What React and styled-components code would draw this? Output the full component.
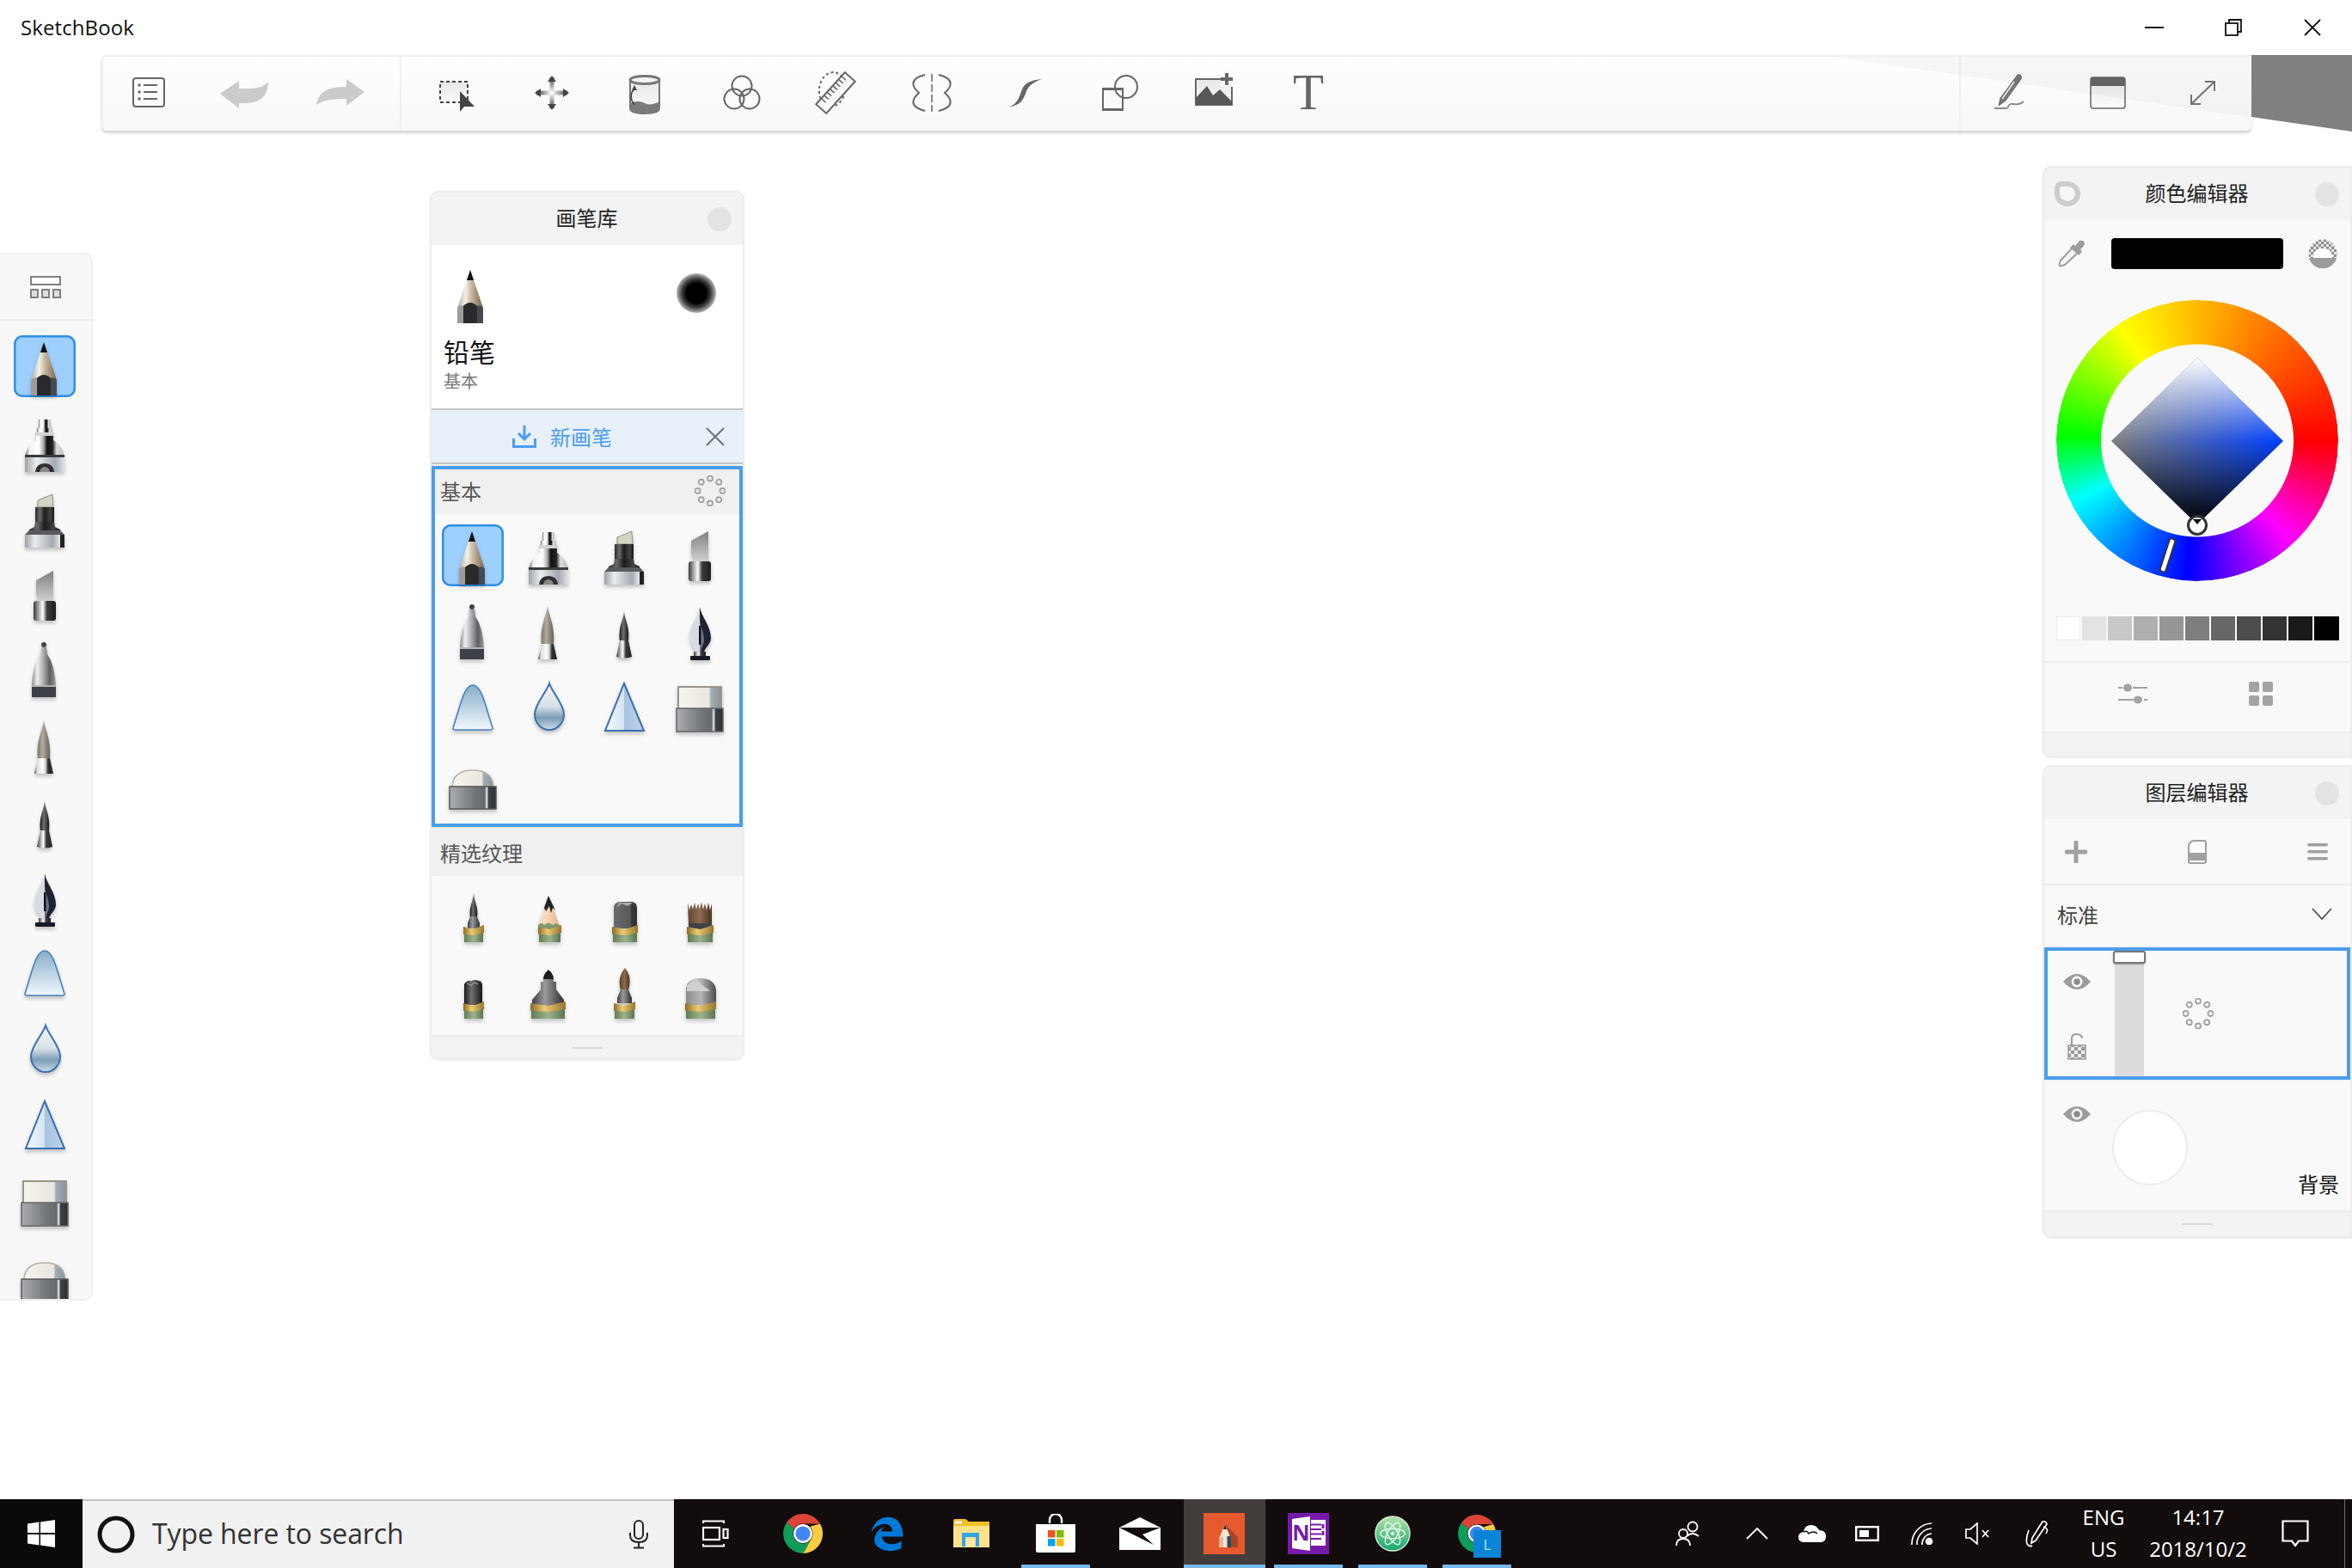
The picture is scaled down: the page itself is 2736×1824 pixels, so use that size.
import React from "react";
import styled, { createGlobalStyle } from "styled-components";

const Global = createGlobalStyle`
  html, body { margin: 0; padding: 0; background: #fff; width: 2736px; height: 1824px; overflow: hidden; }
  * { box-sizing: border-box; }
  #root { width: 2736px; height: 1824px; overflow: hidden; }
`;

const CJK = `"Noto Sans CJK SC", "Noto Sans", sans-serif`;
const LATIN = `"Open Sans", "Noto Sans", sans-serif`;

const Page = styled.div`
  width: 2736px; height: 1824px; display: flex; flex-direction: column; overflow: hidden;
  background: #fff; font-family: ${CJK}; color: #222;
`;
const Hidden = styled.svg` display: block; width: 0; height: 0; `;

/* ---------- Title bar ---------- */
const TitleBar = styled.header` height: 64px; flex: none; display: flex; align-items: center; padding-left: 24px; `;
const AppName = styled.div` font: 400 24px ${LATIN}; color: #111; letter-spacing: 0.1px; flex: 1; padding-bottom: 1px; `;
const WinControls = styled.div` display: flex; `;
const WinButton = styled.div` width: 92px; height: 44px; display: grid; place-items: center; `;

/* ---------- Tool bar ---------- */
const ToolRow = styled.div` height: 89px; flex: none; display: flex; padding-left: 118px; `;
const Toolbar = styled.div`
  position: relative; width: 2501px; height: 88px; display: flex;
  background: linear-gradient(#fefefe, #f8f8f8);
  border-top: 2px solid #f0f0f0; border-left: 2px solid #f0f0f0; border-radius: 6px 0 6px 6px;
  box-shadow: 0 3px 3px rgba(0,0,0,.17);
  &::after {
    content: ""; position: absolute; inset: 0; pointer-events: none; background: rgba(0,0,0,.028);
    clip-path: polygon(80.5% 0, 100% 0, 100% 82%);
  }
`;
const ToolGroup = styled.div`
  display: flex; align-items: center; height: 100%; flex: ${p => p.$grow ? 1 : "none"};
  width: ${p => p.$w ? p.$w + "px" : "auto"}; padding-left: ${p => p.$pad || 0}px;
  margin-left: ${p => p.$shift || 0}px;
  border-left: ${p => p.$line ? "2px solid #f0f0f0" : "none"};
`;
const ToolButton = styled.div`
  flex: none; width: ${p => p.$w || 110}px; height: 56px; display: grid; place-items: center; margin-bottom: 2px; padding-right: 2px;
  svg { overflow: visible; }
`;
const CornerWedge = styled.div`
  flex: 1; height: 89px; background: #808080; clip-path: polygon(0 0, 100% 0, 100% 100%, 0 81%);
`;

/* ---------- Workspace ---------- */
const Workspace = styled.main` flex: 1; display: flex; align-items: flex-start; min-height: 0; `;

const Rail = styled.aside`
  width: 108px; height: 1219px; margin-top: 141px; overflow: hidden; display: flex; flex-direction: column;
  background: #f8f8f8; border: 2px solid #efefef; border-left: none; border-radius: 0 10px 10px 0;
`;
const RailHead = styled.div` height: 77px; flex: none; display: grid; place-items: center; border-bottom: 2px solid #ececec; `;
const RailList = styled.div` display: flex; flex-direction: column; align-items: center; gap: 16.5px; padding: 17px 2px 0 0; `;

const BrushCell = styled.div`
  width: 72px; height: 72px; flex: none; border-radius: 10px;
  background: ${p => p.$on ? "#9dcfff" : "transparent"};
  box-shadow: ${p => p.$on ? "inset 0 0 0 2.5px #2f8fe8" : "none"};
  svg { display: block; filter: drop-shadow(0 3px 2px rgba(0,0,0,.22)); }
`;

const Panel = styled.section`
  flex: none; display: flex; flex-direction: column; overflow: hidden;
  width: ${p => p.$w}px; height: ${p => p.$h}px;
  margin: ${p => p.$m || "0"};
  background: #f3f3f3; border: 2px solid #ececec; border-radius: 10px;
  ${p => p.$edge ? "border-radius:10px 0 0 10px;" : ""}
  box-shadow: 0 1px 2px rgba(0,0,0,.07);
`;
const PanelHead = styled.div`
  height: 61px; flex: none; display: grid; grid-template-columns: 1fr auto 1fr; align-items: center;
  background: #f3f3f3; padding: 0 13px 0 12px;
`;
const PanelTitle = styled.div` font-size: 24px; line-height: 32px; color: #222; padding-bottom: 3px; `;
const CloseDot = styled.div` justify-self: end; width: 28px; height: 28px; border-radius: 50%; background: #e3e3e3; `;
const RingDot = styled.div`
  width: 30px; height: 29px; border-radius: 8px 50% 50% 50%; border: 6px solid #cdcdcd; background: #f7f7f7;
`;
const GripFoot = styled.div` flex: 1; display: grid; place-items: center; background: #f3f3f3; `;
const Grip = styled.div` width: 36px; height: 2px; background: #d9d9d9; `;

/* brush panel */
const BrushInfo = styled.div` height: 190px; flex: none; background: #fff; padding: 21px 0 0 10px; display: flex; flex-direction: column; `;
const InfoTop = styled.div` display: flex; justify-content: space-between; align-items: flex-start; height: 72px; padding-right: 31px; `;
const TipDot = styled.div`
  width: 46px; height: 46px; margin-top: 12px; border-radius: 50%;
  background: radial-gradient(circle, #000 0, #000 36%, rgba(0,0,0,.75) 52%, rgba(0,0,0,.25) 72%, rgba(0,0,0,0) 100%);
`;
const BrushName = styled.div` margin: 12px 0 0 4px; font-size: 30px; line-height: 36px; color: #111; `;
const BrushSet = styled.div` margin: 5px 0 0 4px; font-size: 20px; line-height: 24px; color: #777; `;
const NewRow = styled.div`
  height: 65px; flex: none; display: flex; align-items: center; padding: 0 21px 0 94px; gap: 16px;
  background: #e8f0fa; border-top: 2px solid #c4c4c4; border-bottom: 2px solid #c4c4c4;
  font-size: 24px; color: #4a9df0;
`;
const NewClose = styled.div` margin-left: auto; height: 22px; display: flex; `;
const ActiveSet = styled.div`
  flex: none; height: 420px; margin-top: 2px; border: 4px solid #4a9ded; background: #f9f9f9;
`;
const SetHead = styled.div`
  flex: none; display: flex; align-items: center; justify-content: space-between; height: ${p => p.$h}px;
  padding: 0 ${p => p.$r || 0}px ${p => p.$b || 0}px ${p => p.$l || 6}px;
  font-size: 24px; color: #555; background: #f0f0f0;
`;
const BrushGrid = styled.div`
  flex: none; display: grid; grid-template-columns: repeat(4, 72px); column-gap: 16px; row-gap: ${p => p.$gap}px;
  align-content: start;
  padding: ${p => p.$top}px 0 0 ${p => p.$left}px; background: #f9f9f9;
  height: ${p => p.$h}px;
`;
const FootLine = styled.div` height: 2px; flex: none; background: #ececec; `;

/* right side */
const RightColumn = styled.div` margin-left: auto; width: 360px; margin-top: 40px; display: flex; flex-direction: column; `;
const ColorBody = styled.div` height: 513px; flex: none; background: #f9f9f9; display: flex; flex-direction: column; align-items: center; padding-top: 21px; `;
const ColorTop = styled.div` width: 100%; display: grid; grid-template-columns: 78px 200px 1fr; align-items: center; height: 36px; `;
const Dropper = styled.div` margin-left: 16px; height: 32px; `;
const ColorBar = styled.div` height: 36px; background: #000; border-radius: 4px; `;
const AlphaBall = styled.div` margin-left: 29px; height: 34px; `;
const Wheel = styled.div`
  position: relative; width: 328px; height: 327px; margin-top: 36px; display: grid; place-items: center;
  &::before {
    content: ""; position: absolute; inset: 0; border-radius: 50%;
    background: conic-gradient(from 90deg, #f00 0deg, #f0f 47deg, #00f 94deg, #0ff 154deg, #0f0 182deg, #ff0 236deg, #f00 360deg);
    -webkit-mask: radial-gradient(circle, transparent 111.5px, #000 112.5px);
    mask: radial-gradient(circle, transparent 111.5px, #000 112.5px);
  }
`;
const Diamond = styled.div`
  width: 200px; height: 194px; margin-top: 1px; clip-path: polygon(50% 0, 100% 50%, 50% 100%, 0 50%);
  background:
    linear-gradient(to bottom, #fff 0, rgba(255,255,255,0) 50%, rgba(0,0,0,0) 50%, #000 100%),
    linear-gradient(to right, #808080, #0040ff);
`;
const SatMark = styled.div`
  position: absolute; left: 152px; top: 250px; width: 24px; height: 24px; border-radius: 50%;
  border: 3px solid #333; background: #fff;
  &::after { content: ""; position: absolute; left: 4px; top: 2px; border: 5px solid transparent; border-top: 6px solid #000; }
`;
const HueMark = styled.div`
  position: absolute; left: 125px; top: 276px; width: 9px; height: 42px; border-radius: 4px;
  background: #fff; border: 2px solid #333; transform: rotate(18deg);
`;
const Swatches = styled.div` margin-top: 41px; width: 329px; display: flex; gap: 2px; height: 28px; `;
const Swatch = styled.div` flex: 1; background: ${p => p.$c}; box-shadow: ${p => p.$line ? "inset 0 0 0 1px #ececec" : "none"}; `;
const ColorTools = styled.div`
  height: 84px; flex: none; background: #f9f9f9; display: grid; grid-template-columns: 206px 92px; justify-items: center; align-items: center;
  padding-bottom: 8px; border-top: 2px solid #ececec; border-bottom: 2px solid #ececec;
`;

const LayerTools = styled.div`
  height: 77px; flex: none; background: #f9f9f9; border-bottom: 2px solid #ececec;
  display: flex; align-items: center; justify-content: space-between; padding: 0 26px 0 24px;
`;
const BlendRow = styled.div`
  height: 70px; flex: none; background: #f9f9f9; display: flex; align-items: center; justify-content: space-between;
  padding: 0 21px 4px 15px; font-size: 24px; color: #444;
`;
const ActiveLayer = styled.div`
  height: 154px; flex: none; margin-top: 2px; display: grid; grid-template-columns: 78px 34px 1fr;
  border: 4px solid #4a9ded; background: #f9f9f9;
`;
const LayerSide = styled.div`
  display: flex; flex-direction: column; align-items: center; padding: 26px 10px 0 0; gap: 50px;
`;
const OpacityBar = styled.div` position: relative; background: #dcdcdc; `;
const OpacityKnob = styled.div`
  position: absolute; left: -2px; top: 0; width: 38px; height: 15px; border-radius: 3px; background: #fff;
  border: 2px solid #777; box-shadow: 0 1px 2px rgba(0,0,0,.3);
`;
const LayerThumb = styled.div` padding: 55px 0 0 45px; `;
const BackLayer = styled.div`
  height: 152px; flex: none; margin-top: 2px; background: #f9f9f9; border-bottom: 2px solid #ececec;
  display: grid; grid-template-columns: 79px 88px 1fr;
`;
const BackSide = styled.div` display: flex; justify-content: center; padding: 28px 3px 0 0; `;
const PaperDot = styled.div` width: 88px; height: 88px; margin-top: 33px; border-radius: 50%; background: #fff; border: 2px solid #ececec; `;
const LayerLabel = styled.div` align-self: end; justify-self: end; margin: 0 13px 15px 0; font-size: 24px; line-height: 32px; color: #111; `;

/* ---------- Task bar ---------- */
const TaskBar = styled.footer` flex: none; height: 80px; display: flex; background: #130c0c; `;
const StartBtn = styled.div` width: 96px; display: grid; place-items: center; background: #0a0a0a; `;
const SearchBox = styled.div`
  width: 688px; display: flex; align-items: center; background: #f1f1f1; border-top: 2px solid #c2c2c2;
  padding: 0 29px 0 17px; gap: 20px; font: 400 32px ${LATIN}; color: #333;
`;
const SearchText = styled.div` flex: 1; letter-spacing: -0.1px; padding-bottom: 4px; `;
const TaskList = styled.div` display: flex; padding-left: 3px; `;
const TaskItem = styled.div`
  position: relative; width: 98px; height: 80px; display: grid; place-items: center;
  background: ${p => p.$active ? "#433e3c" : "transparent"};
  ${p => p.$active ? "width: 95px; margin: 0 1.5px;" : ""}
  &::after {
    content: ""; position: absolute; bottom: 0; height: 4px; background: #76b9ed;
    left: ${p => p.$active ? 0 : "9px"}; right: ${p => p.$active ? 0 : "9px"};
    display: ${p => p.$run ? "block" : "none"};
  }
`;
const Tray = styled.div` margin-left: auto; display: flex; align-items: center; color: #fff; font: 400 24px ${LATIN}; `;
const TrayIcon = styled.div` width: ${p => p.$w || 64}px; margin-right: ${p => p.$mr || 0}px; display: grid; place-items: center; `;
const TrayText = styled.div`
  width: ${p => p.$w}px; text-align: center; line-height: 37px; white-space: nowrap; padding-bottom: 2px;
`;
const ShowDesktop = styled.div` width: 24px; height: 80px; position: relative; &::after { content:""; position:absolute; left: 15px; top:0; bottom:0; width:1px; background:#6a6a6a; } `;
const SmallLetter = styled.text` font-family: ${LATIN}; font-weight: 700; `;
const SerifLetter = styled.text` font-family: "Liberation Serif", serif; `;

/* ---------- gradients ---------- */
const stops = (id, list, v) => (
  <linearGradient id={id} x1="0" y1="0" x2={v ? 0 : 1} y2={v ? 1 : 0} key={id}>
    {list.map(([o, c], i) => <stop key={i} offset={o} stopColor={c} />)}
  </linearGradient>
);
const Defs = () => (
  <Hidden aria-hidden="true">
    <defs>
      {stops("wood", [[0, "#b2aea4"], [.32, "#f4f0e6"], [.52, "#cdbca6"], [1, "#7a624a"]])}
      {stops("chrome", [[0, "#6a6c70"], [.12, "#f0f2f4"], [.35, "#fff"], [.47, "#aaa"], [.56, "#111"], [.7, "#222"], [.8, "#ddd"], [1, "#bbb"]])}
      {stops("silver", [[0, "#9ba0a6"], [.25, "#e8ecef"], [.5, "#c2c6cc"], [.7, "#a5a9b2"], [.88, "#e3e5e8"], [.9, "#222"], [1, "#222"]])}
      {stops("silver2", [[0, "#a0a4aa"], [.3, "#eceff2"], [.55, "#c2c6cc"], [.75, "#a5a9b2"], [1, "#dfe2e5"]])}
      {stops("dark", [[0, "#2b2b2d"], [.25, "#6a6a6e"], [.5, "#1b1b1d"], [.8, "#444"], [1, "#151517"]])}
      {stops("fer", [[0, "#3a3a3a"], [.25, "#b4b4b4"], [.42, "#fff"], [.6, "#3d3d3d"], [1, "#1e1e1e"]])}
      {stops("fer2", [[0, "#444"], [.14, "#ddd"], [.45, "#fff"], [.6, "#ccc"], [.72, "#333"], [1, "#222"]])}
      {stops("ball", [[0, "#888"], [.22, "#f0f0f0"], [.45, "#b2b5b8"], [.75, "#5a5e63"], [1, "#999da1"]])}
      {stops("chisel", [[0, "#7f7f7f"], [1, "#d2d2ce"]], true)}
      {stops("hair", [[0, "#7c766c"], [.4, "#b3ab9e"], [.7, "#8c8478"], [1, "#6b655c"]])}
      {stops("ink", [[0, "#1a1a1a"], [.4, "#707070"], [1, "#151515"]])}
      {stops("air", [[0, "#86aec8"], [.5, "#bbd3e3"], [1, "#f2f8fc"]], true)}
      {stops("drop", [[0, "#f6f7f9"], [.5, "#d6dfe7"], [.74, "#7b9cb5"], [1, "#cfdde8"]], true)}
      {stops("tri", [[0, "#f4f8fd"], [.5, "#d4e3f2"], [.5, "#a8c3e1"], [1, "#bdd2e9"]])}
      {stops("cream", [[0, "#f6f4ee"], [.72, "#e9e6df"], [.76, "#a4adb2"], [1, "#87929a"]])}
      {stops("steel", [[0, "#aaadb1"], [.55, "#70757a"], [.76, "#666a70"], [.8, "#eef1f2"], [.84, "#3c4246"], [1, "#2c3134"]])}
      {stops("green", [[0, "#5f7d55"], [.5, "#9db38a"], [1, "#587653"]])}
      {stops("gold", [[0, "#8a6b28"], [.4, "#eccb73"], [1, "#96762c"]])}
      {stops("ferr", [[0, "#3e3e40"], [.4, "#9a9a9c"], [1, "#2f2f31"]])}
      {stops("peach", [[0, "#f6e3cf"], [.5, "#f6d3b4"], [1, "#dcae86"]])}
      {stops("block", [[0, "#6c6c6c"], [.72, "#585858"], [.74, "#3a3a3a"], [1, "#2f2f2f"]])}
      {stops("bristle", [[0, "#5d4330"], [.5, "#8f6b4e"], [1, "#4a3322"]])}
      {stops("roundg", [[0, "#8c8c8c"], [.5, "#b4b4b4"], [1, "#4d4d4d"]])}
      {stops("toolfill", [[0, "#e6e8e8"], [1, "#fafafa"]], true)}
      {stops("moveH", [[0, "#444"], [.5, "#fff"], [1, "#444"]])}
      {stops("moveV", [[0, "#444"], [.5, "#fff"], [1, "#444"]], true)}
      {stops("winfill", [[0, "#e8eaeb"], [1, "#fafafa"]], true)}
      {stops("atom", [[0, "#b6e3a6"], [1, "#0fa86f"]], true)}
    </defs>
  </Hidden>
);

/* ---------- brush glyphs ---------- */
const TexBase = ({ a, b }) => (
  <g>
    <rect x={a + 1} y="58" width={b - a - 2} height="12" fill="url(#green)" />
    <path d={`M${a} 52 L${(a + b) / 2} 55 L${b} 50 V56 L${(a + b) / 2} 61 L${a} 59Z`} fill="url(#gold)" />
    <path d={`M${a} 56 L${(a + b) / 2} 58 L${b} 54 V59 L${(a + b) / 2} 62 L${a} 60.5Z`} fill="url(#gold)" />
  </g>
);
const glyphs = {
  pencil: <>
    <path d="M35 8 L50 52 V70 H20 V52 Z" fill="url(#wood)" />
    <path d="M35 8 L39 20 H31 Z" fill="#111" />
    <path d="M20 70 V52 q4-4 8-2 V70Z" fill="#9c9c9c" />
    <path d="M27 70 V50 q8-8 16 0 V70Z" fill="#2a2a2d" />
    <path d="M43 70 V50 q4-2 7 2 V70Z" fill="#454a50" />
  </>,
  tech: <>
    <rect x="29" y="9" width="14" height="10" fill="url(#chrome)" />
    <rect x="27" y="19" width="18" height="5" fill="url(#chrome)" />
    <rect x="25" y="24" width="22" height="4" fill="#d3d3d6" />
    <path d="M26 28 H46 V33 Q56 39 59 51 H13 Q16 39 26 33 Z" fill="url(#chrome)" />
    <rect x="13" y="50" width="46" height="3" fill="#3c3c3e" />
    <rect x="13" y="53" width="46" height="17" fill="url(#silver2)" />
    <path d="M25 70 Q26 60 36 60 Q46 60 47 70Z" fill="#2f2f31" />
    <path d="M30 70 Q31 64 36 64 Q41 64 42 70Z" fill="#888" />
  </>,
  marker: <>
    <path d="M28 15 L45 8 L46 23 H28 Z" fill="#d5d5c2" stroke="#555" strokeWidth=".6" />
    <rect x="25" y="23" width="22" height="17" fill="url(#dark)" />
    <path d="M25 40 H47 L48 46 L54 49 V56 H18 V49 L24 46Z" fill="url(#dark)" />
    <rect x="13" y="55" width="46" height="15" fill="url(#silver)" />
    <path d="M13 55 L18 50 H54 L59 55Z" fill="#585a5e" />
  </>,
  chisel: <>
    <path d="M26 19 L46 8 V44 H29 L26 35Z" fill="url(#chisel)" />
    <rect x="23" y="43" width="26" height="23" rx="3" fill="url(#fer)" />
  </>,
  ball: <>
    <circle cx="35" cy="6" r="3" fill="#444" />
    <path d="M32 9 H38 L39 17 Q48 30 49 54 H21 Q22 30 31 17Z" fill="url(#ball)" />
    <rect x="21" y="53" width="28" height="2" fill="#b3b3b3" />
    <rect x="21" y="55" width="28" height="12" fill="#3d4147" />
  </>,
  hair: <>
    <path d="M35 5 C37 18 44 28 42 50 H28 C26 28 33 18 35 5Z" fill="url(#hair)" />
    <path d="M28 49 H42 L46 67 H24Z" fill="url(#fer2)" />
  </>,
  inkb: <>
    <path d="M36 11 C37 22 43 28 41 46 H31 C29 28 35 22 36 11Z" fill="url(#ink)" />
    <path d="M31 45 H41 L45 64 Q36 67 27 64Z" fill="url(#fer)" />
  </>,
  nib: <>
    <path d="M36 6 C38 18 49 28 49 42 C49 49 44 51 41 58 H36 V6Z" fill="#1d2333" />
    <path d="M36 6 C34 18 24 28 24 42 C24 49 29 51 31 58 H36 Z" fill="#d8dbe0" />
    <path d="M36 16 C36 30 41 34 41 44 C41 50 38 52 37.5 58 H36Z" fill="#6b7286" />
    <rect x="35" y="28" width="2.4" height="22" fill="#0f1118" />
    <rect x="29" y="58" width="14" height="5" fill="url(#fer)" />
    <rect x="25" y="63" width="23" height="5" rx="1" fill="#161a26" />
  </>,
  air: <path d="M36 8 C46 8 50 30 59 58 Q59 60 56 60 H16 Q13 60 13 58 C22 30 26 8 36 8Z" fill="url(#air)" stroke="#4a80c0" strokeWidth="1.6" />,
  drop: <path d="M37 6 C40 16 54 30 54 42 A17 18 0 0 1 20 42 C20 30 34 16 37 6Z" fill="url(#drop)" stroke="#3a70b0" strokeWidth="2" />,
  tri: <path d="M36 6 L59 61 H14Z" fill="url(#tri)" stroke="#3a70b0" strokeWidth="2" />,
  eraser: <>
    <rect x="11" y="10" width="50" height="28" fill="url(#cream)" stroke="#9a9488" strokeWidth="2" />
    <rect x="9" y="35" width="54" height="27" fill="url(#steel)" stroke="#666" strokeWidth="1.5" />
  </>,
  round: <>
    <path d="M12 38 C12 22 22 17 36 17 C50 17 60 22 60 38Z" fill="url(#cream)" stroke="#b8b2a6" strokeWidth="1.5" />
    <rect x="9" y="36" width="54" height="26" fill="url(#steel)" stroke="#555" strokeWidth="1.5" />
  </>,
  t1: <>
    <path d="M37 13 C38 24 43 30 41 41 H33 C31 30 36 24 37 13Z" fill="url(#ink)" />
    <path d="M33 40 H41 L44 48 V54 H30 V48Z" fill="url(#ferr)" />
    <TexBase a={25} b={49} />
  </>,
  t2: <>
    <path d="M36 16 L50 54 H23Z" fill="url(#peach)" />
    <path d="M36 16 L44 33 L41 30 L39 36 L37 28 L33 34 L31 30Z" fill="#222" />
    <path d="M24 50 q4-4 7 0 q5-5 10 0 q4-4 9 1 V56 H24Z" fill="#7f9b72" />
    <TexBase a={24} b={51} />
  </>,
  t3: <>
    <path d="M24 28 Q26 23 32 23 H45 Q51 24 51 30 V54 H24Z" fill="url(#block)" />
    <path d="M28 30 L33 25 L40 28 L45 25 L50 27 L44 24 H30Z" fill="#a8a8a8" />
    <TexBase a={22} b={52} />
  </>,
  t4: <>
    <path d="M22 24 L24 33 L26 26 L28 32 L30 24 L32 32 L34 25 L36 32 L38 23 L40 32 L42 25 L44 33 L46 24 L48 33 L50 25 V50 H23Z" fill="url(#bristle)" />
    <path d="M23 48 H50 V55 H23Z" fill="#3f4247" />
    <TexBase a={21} b={52} />
  </>,
  t5: <>
    <path d="M26 30 q3-5 8-4 q5-2 9 0 q3 0 4 4 V54 H26Z" fill="url(#ink)" />
    <path d="M29 29 L34 31 L38 28 L42 30" stroke="#999" strokeWidth="1.3" fill="none" />
    <TexBase a={25} b={49} />
  </>,
  t6: <>
    <path d="M36 13 Q42 18 42 24 H30 Q30 18 36 13Z" fill="#1d1d1d" />
    <path d="M30 24 H42 V27 H45 V36 L54 48 V56 H17 V48 L27 36 V27 H30Z" fill="url(#ferr)" />
    <TexBase a={15} b={56} />
  </>,
  t7: <>
    <path d="M37 11 C43 18 44 26 41 37 H32 C29 26 31 18 37 11Z" fill="url(#bristle)" />
    <path d="M32 36 H41 L45 46 V52 H28 V46Z" fill="url(#ferr)" />
    <TexBase a={24} b={49} />
  </>,
  t8: <>
    <path d="M20 36 C20 27 27 23 37 23 C47 23 55 28 55 38 V54 H20Z" fill="url(#roundg)" />
    <path d="M21 32 Q26 24 33 24 L38 30 L48 38 H21Z" fill="#cfcfcf" />
    <TexBase a={19} b={55} />
  </>,
};
const Glyph = ({ name }) => <svg width="72" height="72" viewBox="0 0 72 72">{glyphs[name]}</svg>;

const Spinner = ({ c = "#a3a3a3" }) => (
  <svg width="36" height="36" viewBox="0 0 36 36" style={{ display: "block" }}>
    {[...Array(8)].map((_, i) => {
      const a = i * Math.PI / 4;
      return <circle key={i} cx={18 + 14.5 * Math.cos(a)} cy={18 + 14.5 * Math.sin(a)} r="3" fill="none" stroke={c} strokeWidth="1.9" />;
    })}
  </svg>
);

/* ---------- toolbar icons (56 box) ---------- */
const G = "#666";
const TI = ({ children }) => <svg width="56" height="56" viewBox="0 0 56 56">{children}</svg>;
const ToolIcons = {
  list: <TI><rect x="11" y="11" width="36" height="33" rx="3" fill="none" stroke={G} strokeWidth="2" />
    {[19, 27, 35].map(y => <g key={y}><circle cx="18" cy={y} r="1.7" fill={G} /><rect x="23" y={y - 1} width="16" height="2" fill={G} /></g>)}</TI>,
  undo: <TI><path d="M0 29 L22 14 V23 C34 23 50 24 56 15 C56 32 46 40 30 40 H22 V46 Z" fill="#cbcbcb" /></TI>,
  redo: <TI><path d="M56 27 L35 12 V21 C15 21 3 25 0 42 C8 36 20 35 35 35 V43 Z" fill="#cbcbcb" /></TI>,
  select: <TI><g transform="translate(-2 0)"><rect x="10" y="15" width="32" height="24" fill="url(#toolfill)" stroke="#444" strokeWidth="2" strokeDasharray="4 3" />
    <path d="M33 26 L50 44 L38 44 L33 50Z" fill="#444" /></g></TI>,
  move: <TI><rect x="10" y="25.5" width="36" height="5" fill="url(#moveH)" /><rect x="25.5" y="10" width="5" height="36" fill="url(#moveV)" />
    <path d="M28 8 L33 15 H23Z M28 48 L33 41 H23Z M8 28 L15 23 V33Z M48 28 L41 23 V33Z" fill="#444" /></TI>,
  fill: <TI><g transform="translate(-5 0)"><path d="M14 14 V46 Q14 52 31 52 Q48 52 48 46 V14Z" fill="url(#toolfill)" stroke="#777" strokeWidth="2" />
    <path d="M14 40 Q24 36 31 40 T48 38 V46 Q48 52 31 52 Q14 52 14 46Z" fill="#7a7a7a" />
    <ellipse cx="31" cy="13" rx="17" ry="4.5" fill="#f4f4f4" stroke="#777" strokeWidth="3" />
    <path d="M19 42 Q11 32 19 23" fill="none" stroke="#444" strokeWidth="1.5" /><path d="M19 19 L22 25 L16 25Z" fill="#444" /></g></TI>,
  circles: <TI><g fill="none" stroke={G} strokeWidth="2"><circle cx="29" cy="20" r="11.5" /><circle cx="20" cy="35" r="11.5" /><circle cx="38" cy="35" r="11.5" /></g></TI>,
  ruler: <TI><ellipse cx="24" cy="24" rx="15" ry="20" transform="rotate(8 24 24)" fill="none" stroke={G} strokeWidth="2" strokeDasharray="3 3" />
    <g transform="rotate(42 28 28)"><rect x="20" y="3" width="16" height="50" fill="#f8f8f8" stroke={G} strokeWidth="2" />
    {[9, 14, 19, 24, 29, 34, 39, 44].map(y => <line key={y} x1="20" x2="27" y1={y} y2={y} stroke={G} strokeWidth="1.5" />)}</g></TI>,
  sym: <TI><line x1="30" x2="30" y1="6" y2="50" stroke="#666" strokeWidth="1.5" strokeDasharray="9 3" />
    <g fill="none" stroke="#666" strokeWidth="2"><path d="M22 7 C2 12 8 22 15 28 C8 34 2 44 22 49" /><path d="M38 7 C58 12 52 22 45 28 C52 34 58 44 38 49" /></g></TI>,
  curve: <TI><path d="M8 44 C20 43 22 31 25 24 C28 16 36 13 48 12 C39 15 33 19 30 26 C27 36 22 44 8 44Z" fill="#666" /></TI>,
  shapes: <TI><circle cx="36" cy="21" r="13" fill="none" stroke={G} strokeWidth="2" /><rect x="9" y="23" width="23" height="25" fill="none" stroke={G} strokeWidth="2" /><rect x="8" y="22" width="25" height="3" fill={G} /><rect x="8" y="46" width="25" height="3" fill={G} /></TI>,
  image: <TI><rect x="7" y="12" width="42" height="30" fill="url(#toolfill)" stroke={G} strokeWidth="2" />
    <path d="M7 42 V34 L20 20 L27 31 L35 24 L49 38 V42Z" fill="#585858" /><rect x="36" y="3" width="14" height="18" fill="#fafafa" />
    <path d="M41 5 H45 V10 H50 V14 H45 V19 H41 V14 H36 V10 H41Z" fill={G} /></TI>,
  text: <TI><SerifLetter x="28" y="47" textAnchor="middle" fontSize="59" fill="#666">T</SerifLetter></TI>,
  pen: <TI><g transform="translate(-3 0)"><path d="M39 7 C43 6 44 9 43 12 L25 37 L17 43 L19 34Z" fill="#777" stroke="#666" /><path d="M35 15 L21 35" stroke="#eee" strokeWidth="1.5" />
    <path d="M12 46 H26 C30 46 26 40 34 41 C40 42 44 40 46 38" fill="none" stroke="#888" strokeWidth="1.8" /></g></TI>,
  win: <TI><rect x="9" y="10" width="40" height="36" rx="3" fill="url(#winfill)" stroke={G} strokeWidth="1.5" /><path d="M9 13 Q9 10 12 10 H46 Q49 10 49 13 V20 H9Z" fill="#666" /></TI>,
  expand: <TI><g transform="translate(-3 0)" fill="none" stroke="#777" strokeWidth="2"><path d="M17 41 L44 15" /><path d="M17 30 V41 H28" /><path d="M33 15 H44 V26" /></g></TI>,
};

/* ---------- task icons ---------- */
const ChromeMark = () => (
  <g>
    <path d="M3.9 9.6 A22 22 0 0 0 22.5 44 L31.5 27.5 A11 11 0 0 1 12.4 16.5Z" fill="#0f9d58" />
    <path d="M41.1 11 A22 22 0 0 1 22.5 44 L31.5 27.5 A11 11 0 0 0 29.8 14.2Z" fill="#ffcd40" />
    <path d="M3.9 9.6 A22 22 0 0 1 41.1 11 H22 A11 11 0 0 0 12.4 16.5Z" fill="#db4437" />
    <circle cx="22" cy="22" r="10.5" fill="#fff" /><circle cx="22" cy="22" r="8.2" fill="#4285f4" />
  </g>
);
const ChromeLogo = () => <svg width="46" height="46" viewBox="0 0 44 44"><ChromeMark /></svg>;
const EdgeLogo = () => (
  <svg width="42" height="44" viewBox="0 0 48 48">
    <path d="M3 22 C6 8 16 2 25 2 C38 2 45 12 45 28 H17 C18 35 24 38 30 38 C35 38 40 36 43 34 V43 C38 46 32 47 28 47 C13 47 4 38 8 27 C10 22 14 17 20 15 C17 18 16 21 15.5 21 H31 C31 15 26 11 21 11 C14 11 7 15 3 22Z" fill="#0078d7" />
  </svg>
);
const FolderLogo = () => (
  <svg width="42" height="34" viewBox="0 0 42 34">
    <path d="M0 2 Q0 0 2 0 H14 L18 3 H41 Q42 3 42 4 V9 H0Z" fill="#f5c026" />
    <rect x="2" y="2.5" width="8" height="3" fill="#fff" />
    <rect y="8" width="42" height="25" fill="#ffe28a" />
    <path d="M10 32 V16 H30 V32 H26 V21 H14 V32Z" fill="#31a5e6" />
    <rect x="15" y="23" width="10" height="9" fill="#ffe9a6" />
  </svg>
);
const StoreLogo = () => (
  <svg width="46" height="46" viewBox="0 0 46 46">
    <path d="M16 11 V7 A7 7 0 0 1 30 7 V11" fill="none" stroke="#fff" strokeWidth="2.4" />
    <path d="M0 12 H46 V43 Q46 45 44 45 H2 Q0 45 0 43Z" fill="#fff" />
    <rect x="14" y="19" width="8.5" height="8.5" fill="#f25022" /><rect x="24" y="19" width="8.5" height="8.5" fill="#7fba00" />
    <rect x="14" y="29" width="8.5" height="8.5" fill="#00a4ef" /><rect x="24" y="29" width="8.5" height="8.5" fill="#ffb900" />
  </svg>
);
const MailLogo = () => (
  <svg width="48" height="38" viewBox="0 0 48 38">
    <path d="M0 12 L24 0 L48 12 V38 H0Z" fill="#fff" />
    <path d="M0 12 H48 L27 20 L40 32Z" fill="#130c0c" />
  </svg>
);
const SketchLogo = () => (
  <svg width="48" height="48" viewBox="0 0 48 48">
    <rect width="48" height="48" fill="#e65a2d" />
    <path d="M25 13 L40 28 V40 H30Z" fill="#a84526" />
    <path d="M25 13 L32 30 V40 H18 V30Z" fill="#f2e6d0" />
    <path d="M25 13 L27 19 H23Z" fill="#2a2a33" />
    <rect x="18" y="28" width="5" height="12" fill="#e6b7a0" /><rect x="27.5" y="27" width="4.5" height="13" fill="#2f4a66" />
  </svg>
);
const NoteLogo = () => (
  <svg width="48" height="48" viewBox="0 0 48 48">
    <rect width="48" height="48" fill="#7719aa" />
    <path d="M27 8 H44 V38 H27Z" fill="#fff" />
    <path d="M27 13.5 H39 M27 19 H39 M27 24.5 H39 M27 30 H39" stroke="#7719aa" strokeWidth="2" />
    <rect x="39.5" y="13" width="3" height="5" fill="#7719aa" /><rect x="39.5" y="21" width="3" height="5" fill="#7719aa" />
    <path d="M5 7 L26 4 V44 L5 41Z" fill="#fff" />
    <SmallLetter x="15.5" y="32" textAnchor="middle" fontSize="25" fill="#7719aa">N</SmallLetter>
  </svg>
);
const AtomLogo = () => (
  <svg width="42" height="42" viewBox="0 0 44 44">
    <circle cx="22" cy="22" r="21" fill="url(#atom)" stroke="#d5ecd8" strokeWidth="1.5" />
    <g fill="none" stroke="#e6f8ee" strokeWidth="1.5">
      <ellipse cx="22" cy="22" rx="15" ry="6" transform="rotate(60 22 22)" />
      <ellipse cx="22" cy="22" rx="15" ry="6" transform="rotate(-60 22 22)" />
      <ellipse cx="22" cy="22" rx="15" ry="6" />
    </g>
    <circle cx="22" cy="22" r="2.2" fill="#e6f8ee" />
  </svg>
);
const ChromeL = () => (
  <svg width="50" height="50" viewBox="0 0 50 50" style={{ marginTop: 6, marginLeft: 6 }}>
    <ChromeMark />
    <rect x="18" y="18" width="32" height="32" fill="#0a84d6" />
    <SmallLetter x="34" y="41" textAnchor="middle" fontSize="17" fill="#bfe2fa" style={{ fontWeight: 400 }}>L</SmallLetter>
  </svg>
);

const rail = ["pencil", "tech", "marker", "chisel", "ball", "hair", "inkb", "nib", "air", "drop", "tri", "eraser", "round"];
const tex = ["t1", "t2", "t3", "t4", "t5", "t6", "t7", "t8"];
const grays = ["#ffffff", "#e3e3e3", "#c8c8c8", "#afafaf", "#969696", "#7e7e7e", "#666666", "#4c4c4c", "#333333", "#1a1a1a", "#000000"];

const Eye = () => (
  <svg width="32" height="20" viewBox="0 0 32 20" style={{ display: "block" }}>
    <path d="M0 10 Q16 -8 32 10 Q16 28 0 10Z" fill="#9c9c9c" /><circle cx="16" cy="10" r="6.4" fill="#f9f9f9" /><circle cx="16" cy="10" r="3.8" fill="#8c8c8c" />
  </svg>
);

export default function App() {
  return (
    <>
      <Global />
      <Page>
        <Defs />
        <TitleBar>
          <AppName>SketchBook</AppName>
          <WinControls>
            <WinButton><svg width="22" height="22" viewBox="0 0 22 22"><rect x="0" y="10" width="22" height="2" fill="#111" /></svg></WinButton>
            <WinButton><svg width="22" height="22" viewBox="0 0 22 22" fill="none" stroke="#111" strokeWidth="1.8"><rect x="2" y="6" width="14" height="14" /><path d="M6 6 V2 H20 V16 H16" /></svg></WinButton>
            <WinButton><svg width="22" height="22" viewBox="0 0 22 22" fill="none" stroke="#111" strokeWidth="1.8"><path d="M2 2 L20 20 M20 2 L2 20" /></svg></WinButton>
          </WinControls>
        </TitleBar>

        <ToolRow>
          <Toolbar>
            <ToolGroup $w={345} $shift={-3}>
              {["list", "undo", "redo"].map(k => <ToolButton $w={112} key={k}>{ToolIcons[k]}</ToolButton>)}
            </ToolGroup>
            <ToolGroup $grow $pad={11} $line $shift={3}>
              {["select", "move", "fill", "circles", "ruler", "sym", "curve", "shapes", "image", "text"].map(k => <ToolButton key={k}>{ToolIcons[k]}</ToolButton>)}
            </ToolGroup>
            <ToolGroup $w={340} $pad={3} $line>
              {["pen", "win", "expand"].map(k => <ToolButton $w={112} key={k}>{ToolIcons[k]}</ToolButton>)}
            </ToolGroup>
          </Toolbar>
          <CornerWedge />
        </ToolRow>

        <Workspace>
          <Rail>
            <RailHead>
              <svg width="36" height="26" viewBox="0 0 36 26">
                <rect x="1" y="1" width="34" height="9" fill="#fff" stroke="#808080" strokeWidth="2" />
                {[0, 13, 26].map(x => <rect key={x} x={x + 1} y="16" width="8" height="9" fill="#ddd" stroke="#808080" strokeWidth="2" />)}
              </svg>
            </RailHead>
            <RailList>
              {rail.map((n, i) => <BrushCell key={n} $on={i === 0}><Glyph name={n} /></BrushCell>)}
            </RailList>
          </Rail>

          <Panel $w={366} $h={1011} $m="69px 0 0 392px">
            <PanelHead>
              <span />
              <PanelTitle>画笔库</PanelTitle>
              <CloseDot />
            </PanelHead>
            <BrushInfo>
              <InfoTop><Glyph name="pencil" /><TipDot /></InfoTop>
              <BrushName>铅笔</BrushName>
              <BrushSet>基本</BrushSet>
            </BrushInfo>
            <NewRow>
              <svg width="28" height="26" viewBox="0 0 28 26"><path d="M14 0 V15 M7 9 L14 16 L21 9" fill="none" stroke="#4a9df0" strokeWidth="3" /><path d="M1.5 15 V24.5 H26.5 V15" fill="none" stroke="#4a9df0" strokeWidth="3" /></svg>
              新画笔
              <NewClose><svg width="22" height="22" viewBox="0 0 22 22"><path d="M1 1 L21 21 M21 1 L1 21" stroke="#777" strokeWidth="2.2" /></svg></NewClose>
            </NewRow>
            <ActiveSet>
              <SetHead $h={52} $r={16} $b={3}>基本<Spinner c="#a3a3a3" /></SetHead>
              <BrushGrid $gap={17.5} $top={12} $left={8} $h={360}>
                {rail.map((n, i) => <BrushCell key={n} $on={i === 0}><Glyph name={n} /></BrushCell>)}
              </BrushGrid>
            </ActiveSet>
            <FootLine />
            <SetHead $h={55} $l={10}>精选纹理</SetHead>
            <BrushGrid $gap={17} $top={7} $left={12} $h={185}>
              {tex.map(n => <BrushCell key={n}><Glyph name={n} /></BrushCell>)}
            </BrushGrid>
            <FootLine />
            <GripFoot><Grip /></GripFoot>
          </Panel>

          <RightColumn>
            <Panel $w={360} $h={688} $edge>
              <PanelHead>
                <RingDot />
                <PanelTitle>颜色编辑器</PanelTitle>
                <CloseDot />
              </PanelHead>
              <ColorBody>
                <ColorTop>
                  <Dropper>
                    <svg width="32" height="32" viewBox="0 0 32 32">
                      <path d="M16 10 L3 24 Q1 29 2 30 Q4 31 8 29 L22 16" fill="#f6f6f6" stroke="#9c9c9c" strokeWidth="2" />
                      <path d="M14 9 L18 5 L20 7 L25 1 Q30 0 31 4 Q31 7 26 11 L28 14 L24 18Z" fill="#9c9c9c" />
                    </svg>
                  </Dropper>
                  <ColorBar />
                  <AlphaBall>
                    <svg width="34" height="34" viewBox="0 0 34 34">
                      <defs><pattern id="chk" width="6" height="6" patternUnits="userSpaceOnUse"><rect width="6" height="6" fill="#e6e6e6" /><rect width="3" height="3" fill="#8f8f8f" /><rect x="3" y="3" width="3" height="3" fill="#8f8f8f" /></pattern></defs>
                      <circle cx="17" cy="17" r="16.5" fill="url(#chk)" />
                      <path d="M1 22 H33 A16.5 16.5 0 0 1 1 22Z" fill="#9c9c9c" />
                      <path d="M6 22 C6 14 10 11 17 11 C24 11 28 14 28 22Z" fill="#fff" />
                    </svg>
                  </AlphaBall>
                </ColorTop>
                <Wheel>
                  <Diamond />
                  <SatMark />
                  <HueMark />
                </Wheel>
                <Swatches>
                  {grays.map((c, i) => <Swatch key={c} $c={c} $line={i === 0} />)}
                </Swatches>
              </ColorBody>
              <ColorTools>
                <svg width="34" height="26" viewBox="0 0 34 26">
                  <g stroke="#a3a3a3" strokeWidth="2"><path d="M0 6 H5 M17 6 H34 M0 20 H18 M30 20 H34" /></g>
                  <ellipse cx="11" cy="6" rx="5" ry="4.5" fill="#a3a3a3" /><ellipse cx="23" cy="20" rx="5" ry="4.5" fill="#a3a3a3" />
                </svg>
                <svg width="28" height="28" viewBox="0 0 28 28" fill="#a3a3a3">
                  <rect width="12" height="12" rx="2" /><rect x="16" width="12" height="12" rx="2" /><rect y="16" width="12" height="12" rx="2" /><rect x="16" y="16" width="12" height="12" rx="2" />
                </svg>
              </ColorTools>
              <GripFoot />
            </Panel>

            <Panel $w={360} $h={550} $m="9px 0 0" $edge>
              <PanelHead>
                <span />
                <PanelTitle>图层编辑器</PanelTitle>
                <CloseDot />
              </PanelHead>
              <LayerTools>
                <svg width="26" height="26" viewBox="0 0 26 26"><path d="M13 2 V24 M2 13 H24" stroke="#a0a0a0" strokeWidth="5" strokeLinecap="round" /></svg>
                <svg width="22" height="28" viewBox="0 0 22 28"><path d="M1 8 Q1 1 8 1 H19 Q21 1 21 3 V25 Q21 27 19 27 H3 Q1 27 1 25Z" fill="#fbfbfb" stroke="#a0a0a0" strokeWidth="2" /><rect x="2" y="15" width="18" height="9" fill="#a0a0a0" /></svg>
                <svg width="24" height="20" viewBox="0 0 24 20" fill="#a0a0a0"><rect width="24" height="3.6" rx="1.8" /><rect y="8" width="24" height="3.6" rx="1.8" /><rect y="16" width="24" height="3.6" rx="1.8" /></svg>
              </LayerTools>
              <BlendRow>
                标准
                <svg width="24" height="14" viewBox="0 0 24 14"><path d="M1 1 L12 13 L23 1" fill="none" stroke="#444" strokeWidth="1.6" /></svg>
              </BlendRow>
              <ActiveLayer>
                <LayerSide>
                  <Eye />
                  <svg width="22" height="31" viewBox="0 0 22 31">
                    <defs><pattern id="chk2" width="8" height="8" patternUnits="userSpaceOnUse"><rect width="8" height="8" fill="#eee" /><rect width="4" height="4" fill="#9a9a9a" /><rect x="4" y="4" width="4" height="4" fill="#9a9a9a" /></pattern></defs>
                    <path d="M5 15 V6 Q5 1 10 1 Q17 1 17 6" fill="none" stroke="#999" strokeWidth="2" />
                    <rect x="1" y="14" width="20" height="16" fill="url(#chk2)" stroke="#999" strokeWidth="1.5" />
                  </svg>
                </LayerSide>
                <OpacityBar><OpacityKnob /></OpacityBar>
                <LayerThumb><Spinner /></LayerThumb>
              </ActiveLayer>
              <BackLayer>
                <BackSide><Eye /></BackSide>
                <PaperDot />
                <LayerLabel>背景</LayerLabel>
              </BackLayer>
              <GripFoot><Grip /></GripFoot>
            </Panel>
          </RightColumn>
        </Workspace>

        <TaskBar>
          <StartBtn>
            <svg width="32" height="32" viewBox="0 0 32 32" fill="#fff">
              <path d="M0 4.5 L13.5 2.6 V15 H0Z M15 2.4 L32 0 V15 H15Z M0 17 H13.5 V29.4 L0 27.5Z M15 17 H32 V32 L15 29.6Z" />
            </svg>
          </StartBtn>
          <SearchBox>
            <svg width="44" height="44" viewBox="0 0 44 44"><circle cx="22" cy="22" r="19" fill="none" stroke="#111" strokeWidth="5" /></svg>
            <SearchText>Type here to search</SearchText>
            <svg width="24" height="34" viewBox="0 0 24 34" fill="none" stroke="#222" strokeWidth="2">
              <rect x="7" y="1" width="10" height="21" rx="5" /><path d="M2 15 V18 Q2 26 12 26 Q22 26 22 18 V15 M12 26 V32 M6 32.5 H18" />
            </svg>
          </SearchBox>
          <TaskList>
            <TaskItem>
              <svg width="32" height="32" viewBox="0 0 32 32" fill="none" stroke="#fff" strokeWidth="2.2" style={{ marginRight: 6 }}>
                <path d="M0 1.5 H26 M0 30.5 H26" /><rect x="1" y="9" width="19" height="14" /><rect x="24.5" y="11" width="5" height="10" /><path d="M1 1 V4 M25 1 V4 M1 28 V31 M25 28 V31" />
              </svg>
            </TaskItem>
            <TaskItem><ChromeLogo /></TaskItem>
            <TaskItem><EdgeLogo /></TaskItem>
            <TaskItem><FolderLogo /></TaskItem>
            <TaskItem $run><StoreLogo /></TaskItem>
            <TaskItem><MailLogo /></TaskItem>
            <TaskItem $run $active><SketchLogo /></TaskItem>
            <TaskItem $run><NoteLogo /></TaskItem>
            <TaskItem $run><AtomLogo /></TaskItem>
            <TaskItem $run><ChromeL /></TaskItem>
          </TaskList>
          <Tray>
            <TrayIcon $mr={17}>
              <svg width="28" height="30" viewBox="0 0 28 30" fill="none" stroke="#fff" strokeWidth="1.8">
                <circle cx="20" cy="7" r="5.5" /><path d="M13 18 Q20 12 27 18" /><circle cx="9" cy="15" r="5" /><path d="M1 29 Q1 21 9 21 Q17 21 17 29" />
              </svg>
            </TrayIcon>
            <TrayIcon><svg width="26" height="14" viewBox="0 0 26 14" fill="none" stroke="#fff" strokeWidth="1.8"><path d="M1 13 L13 1 L25 13" /></svg></TrayIcon>
            <TrayIcon><svg width="32" height="24" viewBox="0 0 32 24" fill="#fff"><path d="M7 22 Q0 22 0 16 Q0 11 6 10 Q7 2 15 2 Q21 2 24 8 Q32 8 32 15 Q32 22 26 22Z" /><path d="M6 10 Q10 8 12 12 Q18 8 22 12" fill="none" stroke="#130c0c" strokeWidth="1.5" /></svg></TrayIcon>
            <TrayIcon><svg width="28" height="18" viewBox="0 0 28 18"><rect x="1.2" y="1.2" width="25.6" height="15.6" fill="none" stroke="#fff" strokeWidth="2.4" /><rect x="5" y="5" width="11" height="8" fill="#fff" /></svg></TrayIcon>
            <TrayIcon><svg width="26" height="26" viewBox="0 0 26 26" fill="none" stroke="#fff" strokeWidth="1.7"><path d="M1 26 A24 24 0 0 1 24 1 M7 26 A18 18 0 0 1 24 7 M13 26 A12 12 0 0 1 24 13" /><circle cx="21" cy="22" r="3.5" fill="#fff" /></svg></TrayIcon>
            <TrayIcon><svg width="28" height="26" viewBox="0 0 28 26" fill="none" stroke="#fff" strokeWidth="1.7"><path d="M1 8 H6 L14 1 V25 L6 18 H1Z" /><path d="M20 9 L27 17 M27 9 L20 17" /></svg></TrayIcon>
            <TrayIcon $w={76}><svg width="32" height="32" viewBox="0 0 32 32" fill="none" stroke="#fff" strokeWidth="1.7"><path d="M22 2 Q26 1 27 5 L14 24 L9 27 L10 21Z" /><path d="M6 12 Q2 22 4 28 Q7 32 10 30 M23 8 Q30 10 26 16" /></svg></TrayIcon>
            <TrayText $w={78}>ENG<br />US</TrayText>
            <TrayText $w={142}>14:17<br />2018/10/2</TrayText>
            <TrayIcon $w={84}><svg width="32" height="32" viewBox="0 0 32 32"><path d="M1.5 1.5 H30.5 V24.5 H20 L16 30 L12 24.5 H1.5Z" fill="none" stroke="#fff" strokeWidth="2.2" /></svg></TrayIcon>
            <ShowDesktop />
          </Tray>
        </TaskBar>
      </Page>
    </>
  );
}
